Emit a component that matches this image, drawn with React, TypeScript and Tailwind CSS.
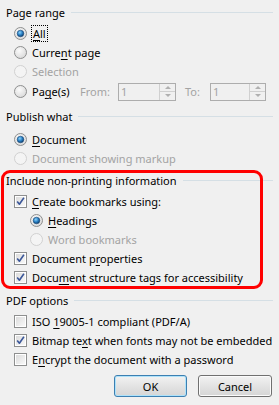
import React from 'react'

const font = { fontFamily: '"Noto Sans", "Segoe UI", sans-serif' }

function Radio({ checked = false, disabled = false }: { checked?: boolean; disabled?: boolean }) {
  const ring = disabled ? '#d0d0d0' : '#8e8f8f'
  return (
    <svg width="13" height="13" viewBox="0 0 13 13" className="shrink-0">
      <defs>
        <radialGradient id="rfill" cx="40%" cy="35%" r="70%">
          <stop offset="0%" stopColor="#fbfbfb" />
          <stop offset="100%" stopColor="#d8d8d8" />
        </radialGradient>
        <radialGradient id="rdot" cx="40%" cy="35%" r="65%">
          <stop offset="0%" stopColor="#8fd3f8" />
          <stop offset="55%" stopColor="#2a82c7" />
          <stop offset="100%" stopColor="#0e3f6e" />
        </radialGradient>
      </defs>
      <circle cx="6.5" cy="6.5" r="6" fill={disabled ? '#f4f4f4' : 'url(#rfill)'} stroke={ring} />
      {checked && <circle cx="6.5" cy="6.5" r="3.3" fill="url(#rdot)" stroke="#1b4a78" strokeWidth="0.6" />}
    </svg>
  )
}

function Check({ checked = false }: { checked?: boolean }) {
  return (
    <svg width="13" height="13" viewBox="0 0 13 13" className="shrink-0">
      <defs>
        <linearGradient id="cfill" x1="0" y1="0" x2="1" y2="1">
          <stop offset="0%" stopColor="#dcdcdc" />
          <stop offset="100%" stopColor="#f8f8f8" />
        </linearGradient>
      </defs>
      <rect x="0.5" y="0.5" width="12" height="12" fill="#ffffff" stroke="#8e8f8f" />
      <rect x="2" y="2" width="9" height="9" fill="url(#cfill)" />
      {checked && (
        <path d="M3.2 6.4 L5.4 9.2 L9.9 2.8" fill="none" stroke="#3b5799" strokeWidth="1.6" strokeLinejoin="round" />
      )}
    </svg>
  )
}

function Header({ label }: { label: string }) {
  return (
    <div className="flex items-center h-[16px] pl-[6px] pr-[6px]">
      <span>{label}</span>
      <div className="flex-1 h-px bg-[#d5dfe5] ml-[6px]" />
    </div>
  )
}

function Row({
  indent = 14,
  control,
  disabled = false,
  children,
}: {
  indent?: number
  control: React.ReactNode
  disabled?: boolean
  children: React.ReactNode
}) {
  return (
    <div
      className={`flex items-center h-[19px] gap-[5px] ${disabled ? 'text-[#a3a3a3]' : 'text-black'}`}
      style={{ paddingLeft: indent }}
    >
      {control}
      <span className="whitespace-nowrap">{children}</span>
    </div>
  )
}

function Spin({ width, value }: { width: string; value: string }) {
  return (
    <div className={`flex h-[18px] border border-[#adadad] bg-[#f0f0f0] ${width}`}>
      <span className="flex-1 pl-[2px] leading-[16px] text-[#a3a3a3]">{value}</span>
      <div className="flex flex-col w-[16px] border-l border-[#d0d0d0]">
        <div className="flex-1 flex items-center justify-center border-b border-[#d0d0d0]">
          <div className="w-0 h-0 border-l-[3px] border-r-[3px] border-b-[3px] border-l-transparent border-r-transparent border-b-[#b0b0b0]" />
        </div>
        <div className="flex-1 flex items-center justify-center">
          <div className="w-0 h-0 border-l-[3px] border-r-[3px] border-t-[3px] border-l-transparent border-r-transparent border-t-[#b0b0b0]" />
        </div>
      </div>
    </div>
  )
}

const U = ({ children }: { children: React.ReactNode }) => <span className="underline underline-offset-[2px]">{children}</span>

export default function App() {
  return (
    <div className="relative w-[279px] h-[405px] bg-[#f0f0f0] text-[11px] leading-none text-black overflow-hidden" style={font}>
      <div className="flex flex-col pt-[4px]">
        <Header label="Page range" />
        <div className="h-[4px]" />
        <Row control={<Radio checked />}>
          <span className="outline-1 outline-dotted outline-black px-px"><U>A</U>ll</span>
        </Row>
        <Row control={<Radio />}>
          Curre<U>n</U>t page
        </Row>
        <Row control={<Radio disabled />} disabled>
          Selection
        </Row>
        <div className="flex items-center h-[21px] pl-[14px]">
          <Radio />
          <span className="w-[48px] ml-[5px]">
            Pa<U>g</U>e(s)
          </span>
          <span className="w-[38px] text-[#a3a3a3]">From:</span>
          <Spin width="w-[58px]" value="1" />
          <span className="w-[25px] ml-[9px] text-[#a3a3a3]">To:</span>
          <Spin width="w-[56px]" value="1" />
        </div>

        <div className="h-[6px]" />
        <Header label="Publish what" />
        <div className="h-[6px]" />
        <Row control={<Radio checked />}>
          <U>D</U>ocument
        </Row>
        <Row control={<Radio disabled />} disabled>
          Document showing markup
        </Row>

        <div className="h-[4px]" />
        <Header label="Include non-printing information" />
        <div className="h-[4px]" />
        <Row control={<Check checked />}>
          <U>C</U>reate bookmarks using:
        </Row>
        <Row indent={30} control={<Radio checked />}>
          <U>H</U>eadings
        </Row>
        <Row indent={30} control={<Radio disabled />} disabled>
          Word bookmarks
        </Row>
        <Row control={<Check checked />}>
          Document p<U>r</U>operties
        </Row>
        <Row control={<Check checked />}>
          Docu<U>m</U>ent structure tags for accessibility
        </Row>

        <div className="h-[5px]" />
        <Header label="PDF options" />
        <div className="h-[4px]" />
        <Row control={<Check />}>
          ISO <U>1</U>9005-1 compliant (PDF/A)
        </Row>
        <Row control={<Check checked />}>
          Bitmap te<U>x</U>t when fonts may not be embedded
        </Row>
        <Row control={<Check />}>
          E<U>n</U>crypt the document with a password
        </Row>

        <div className="flex justify-end gap-[11px] pr-[7px] mt-[6px]">
          <button className="w-[73px] h-[22px] rounded-[3px] border border-[#3c7fb1] bg-gradient-to-b from-[#f2f2f2] to-[#d5d5d5] shadow-[inset_0_0_0_1px_#aee2fa]">
            OK
          </button>
          <button className="w-[74px] h-[22px] rounded-[3px] border border-[#707070] bg-gradient-to-b from-[#f2f2f2] to-[#d5d5d5] shadow-[inset_0_0_0_1px_#fbfbfb]">
            Cancel
          </button>
        </div>
      </div>

      {/* red annotation drawn over the dialog */}
      <div className="absolute left-[1px] top-[170px] w-[262px] h-[119px] border-[3px] border-[#ff0000] rounded-[9px] pointer-events-none" />
    </div>
  )
}
